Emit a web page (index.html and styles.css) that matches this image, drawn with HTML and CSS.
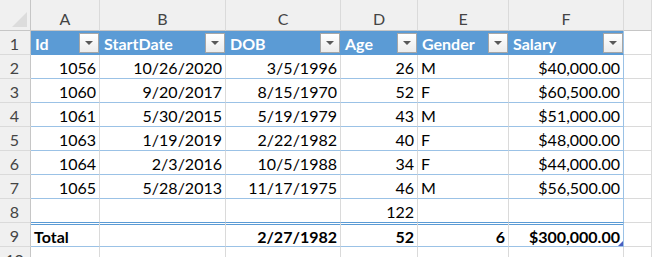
FILE: index.html
```html
<!DOCTYPE html>
<html>
<head>
<meta charset="utf-8">
<link rel="stylesheet" href="styles.css">
</head>
<body>
<div class="sheet">
  <div class="c corner"><span class="tri"></span></div>
  <div class="c colh">A</div>
  <div class="c colh">B</div>
  <div class="c colh">C</div>
  <div class="c colh">D</div>
  <div class="c colh">E</div>
  <div class="c colh">F</div>
  <div class="c colh"></div>

  <div class="c rowh">1</div>
  <div class="c th"><span>Id</span><span class="fb"><svg width="8" height="4" viewBox="0 0 8 4"><path d="M0 0H8L4 4Z" fill="#595959"/></svg></span></div>
  <div class="c th"><span>StartDate</span><span class="fb"><svg width="8" height="4" viewBox="0 0 8 4"><path d="M0 0H8L4 4Z" fill="#595959"/></svg></span></div>
  <div class="c th"><span>DOB</span><span class="fb"><svg width="8" height="4" viewBox="0 0 8 4"><path d="M0 0H8L4 4Z" fill="#595959"/></svg></span></div>
  <div class="c th"><span>Age</span><span class="fb"><svg width="8" height="4" viewBox="0 0 8 4"><path d="M0 0H8L4 4Z" fill="#595959"/></svg></span></div>
  <div class="c th"><span>Gender</span><span class="fb"><svg width="8" height="4" viewBox="0 0 8 4"><path d="M0 0H8L4 4Z" fill="#595959"/></svg></span></div>
  <div class="c th th-last"><span>Salary</span><span class="fb"><svg width="8" height="4" viewBox="0 0 8 4"><path d="M0 0H8L4 4Z" fill="#595959"/></svg></span></div>
  <div class="c"></div>

  <div class="c rowh">2</div>
  <div class="c td r">1056</div><div class="c td r">10/26/2020</div><div class="c td r">3/5/1996</div><div class="c td r">26</div><div class="c td">M</div><div class="c td r last">$40,000.00</div><div class="c"></div>

  <div class="c rowh">3</div>
  <div class="c td r">1060</div><div class="c td r">9/20/2017</div><div class="c td r">8/15/1970</div><div class="c td r">52</div><div class="c td">F</div><div class="c td r last">$60,500.00</div><div class="c"></div>

  <div class="c rowh">4</div>
  <div class="c td r">1061</div><div class="c td r">5/30/2015</div><div class="c td r">5/19/1979</div><div class="c td r">43</div><div class="c td">M</div><div class="c td r last">$51,000.00</div><div class="c"></div>

  <div class="c rowh">5</div>
  <div class="c td r">1063</div><div class="c td r">1/19/2019</div><div class="c td r">2/22/1982</div><div class="c td r">40</div><div class="c td">F</div><div class="c td r last">$48,000.00</div><div class="c"></div>

  <div class="c rowh">6</div>
  <div class="c td r">1064</div><div class="c td r">2/3/2016</div><div class="c td r">10/5/1988</div><div class="c td r">34</div><div class="c td">F</div><div class="c td r last">$44,000.00</div><div class="c"></div>

  <div class="c rowh">7</div>
  <div class="c td r">1065</div><div class="c td r">5/28/2013</div><div class="c td r">11/17/1975</div><div class="c td r">46</div><div class="c td">M</div><div class="c td r last">$56,500.00</div><div class="c"></div>

  <div class="c rowh">8</div>
  <div class="c td pre"></div><div class="c td pre"></div><div class="c td pre"></div><div class="c td pre r">122</div><div class="c td pre"></div><div class="c td pre last"></div><div class="c"></div>

  <div class="c rowh">9</div>
  <div class="c td tot">Total</div><div class="c td tot"></div><div class="c td tot r">2/27/1982</div><div class="c td tot r">52</div><div class="c td tot r">6</div><div class="c td tot r last handle-cell">$300,000.00<span class="handle"></span></div><div class="c"></div>

  <div class="c rowh">10</div>
  <div class="c"></div><div class="c"></div><div class="c"></div><div class="c"></div><div class="c"></div><div class="c"></div><div class="c"></div>
</div>
</body>
</html>
```

FILE: styles.css
```css
body {
  margin: 0;
  background: #ffffff;
  font-family: Lato, "Open Sans", sans-serif;
  font-size: 16px;
  color: #000000;
  overflow: hidden;
}

.sheet {
  display: grid;
  grid-template-columns: 31px 69px 126px 115px 77px 91px 115px 1fr;
  grid-template-rows: 31px repeat(10, 24px);
  width: 652px;
  height: 257px;
  overflow: hidden;
}

.c {
  box-sizing: border-box;
  border-right: 1px solid #dadada;
  border-bottom: 1px solid #dadada;
  padding: 3px 3px 0 3px;
  line-height: 19px;
  white-space: nowrap;
  overflow: hidden;
}

.r {
  text-align: right;
}

.corner {
  position: relative;
  background: #f0f0f0;
  border-right-color: #c6c6c6;
  border-bottom-color: #c6c6c6;
}

.tri {
  position: absolute;
  left: 12px;
  top: 12px;
  width: 15px;
  height: 15px;
  background: #dcdcdc;
  clip-path: polygon(100% 0, 100% 100%, 0 100%);
}

.colh {
  background: #f0f0f0;
  color: #444444;
  text-align: center;
  padding-top: 9px;
  border-bottom-color: #c6c6c6;
}

.rowh {
  background: #f0f0f0;
  color: #444444;
  text-align: center;
  border-right-color: #c6c6c6;
  padding-left: 0;
  padding-right: 1px;
}

.th {
  display: flex;
  justify-content: space-between;
  align-items: flex-start;
  background: #5b9bd5;
  color: #ffffff;
  font-weight: bold;
  border-right-color: #5b9bd5;
  border-bottom-color: #5b9bd5;
  padding: 0 0 0 4px;
}

.th > span:first-child {
  padding-top: 3px;
}

.th-last {
  border-right-color: #9bc2e6;
}

.fb {
  box-sizing: border-box;
  width: 20px;
  height: 20px;
  margin-top: 2px;
  border: 1px solid #a6a6a6;
  background: linear-gradient(#ffffff, #ececec);
  display: flex;
  align-items: center;
  justify-content: center;
}

.td {
  border-bottom-color: #9bc2e6;
}

.last {
  border-right-color: #9bc2e6;
}

.pre {
  border-bottom-color: #5b9bd5;
}

.tot {
  font-weight: bold;
  padding-top: 4px;
  box-shadow: inset 0 1px 0 #ffffff, inset 0 2px 0 #5b9bd5;
}

.handle-cell {
  position: relative;
}

.handle {
  position: absolute;
  right: 0;
  bottom: 0;
  width: 5px;
  height: 5px;
  background: #4a5fc1;
  clip-path: polygon(100% 0, 100% 100%, 0 100%);
}
```
